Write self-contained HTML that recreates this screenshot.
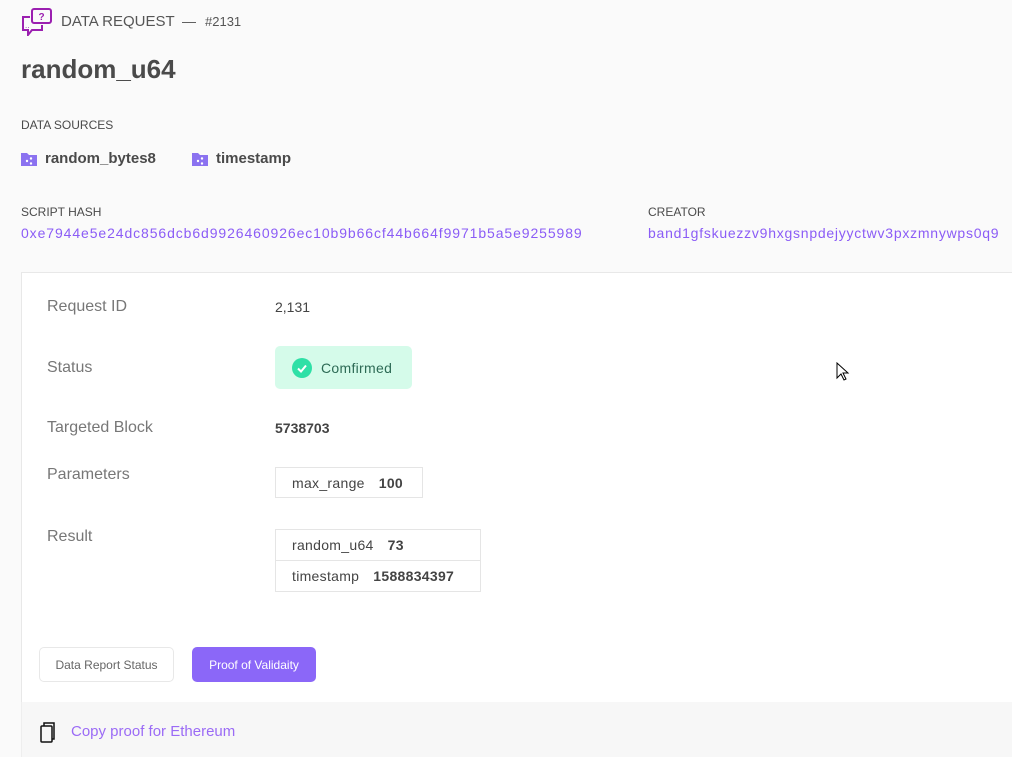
<!DOCTYPE html>
<html><head><style>
body{margin:0;width:1012px;height:757px;background:#fafafa;font-family:"Liberation Sans",sans-serif;color:#4a4a4a;position:relative;overflow:hidden}
.a{position:absolute;white-space:nowrap}
.lbl{font-size:12px;color:#4a4a4a}
.link{font-size:14px;color:#8b5cf6}
.k{font-size:16px;color:#777}
.box{position:absolute;border:1px solid #e5e5e5;background:#fff;font-size:14px;color:#444;box-sizing:border-box;padding:0 16px;display:flex;align-items:center;letter-spacing:0.3px}
.box b{margin-left:14px;font-weight:600}
</style></head><body>
<svg class="a" style="left:21px;top:8px" width="32" height="28" viewBox="0 0 32 28" fill="none" stroke="#9b1fb0" stroke-width="2"><rect x="11" y="1" width="19" height="14" rx="2"/><path d="M9 9H2v13h5v5l4-5h10v-5"/><text x="17.5" y="12" font-size="10" fill="#9b1fb0" stroke="none" font-family="Liberation Sans" font-weight="bold">?</text><text x="4" y="20" font-size="8" fill="#9b1fb0" stroke="none">..</text></svg>
<div class="a" style="left:61px;top:13px;font-size:15px;color:#555">DATA REQUEST</div>
<div class="a" style="left:182px;top:13px;font-size:14px;color:#555">—</div>
<div class="a" style="left:205px;top:14px;font-size:13px;color:#555">#2131</div>
<div class="a" style="left:21px;top:54px;font-size:26px;font-weight:bold;color:#4a4a4a">random_u64</div>
<div class="a lbl" style="left:21px;top:118px">DATA SOURCES</div>
<svg class="a" style="left:21px;top:152px" width="16" height="14"><path d="M0 1h6l2 2h8v11H0z" fill="#8b72f0"/><circle cx="6" cy="9" r="1.2" fill="#fff"/><circle cx="10" cy="6.5" r="1.2" fill="#fff"/><circle cx="10" cy="11.5" r="1.2" fill="#fff"/></svg>
<div class="a" style="left:45px;top:150px;font-size:15px;font-weight:bold">random_bytes8</div>
<svg class="a" style="left:192px;top:152px" width="16" height="14"><path d="M0 1h6l2 2h8v11H0z" fill="#8b72f0"/><circle cx="6" cy="9" r="1.2" fill="#fff"/><circle cx="10" cy="6.5" r="1.2" fill="#fff"/><circle cx="10" cy="11.5" r="1.2" fill="#fff"/></svg>
<div class="a" style="left:216px;top:150px;font-size:15px;font-weight:bold">timestamp</div>
<div class="a lbl" style="left:21px;top:205px">SCRIPT HASH</div>
<div class="a link" style="left:21px;top:225px;letter-spacing:0.9px">0xe7944e5e24dc856dcb6d9926460926ec10b9b66cf44b664f9971b5a5e9255989</div>
<div class="a lbl" style="left:648px;top:205px">CREATOR</div>
<div class="a link" style="left:648px;top:225px;letter-spacing:0.75px">band1gfskuezzv9hxgsnpdejyyctwv3pxzmnywps0q9</div>
<div class="a" style="left:21px;top:272px;width:991px;height:430px;background:#fff;border-top:1px solid #e8e8e8;border-left:1px solid #e8e8e8"></div>
<div class="a" style="left:21px;top:702px;width:991px;height:55px;background:#f7f7f7;border-left:1px solid #eee"></div>
<div class="a k" style="left:47px;top:298px">Request ID</div>
<div class="a" style="left:275px;top:299px;font-size:14px;color:#444">2,131</div>
<div class="a k" style="left:47px;top:359px">Status</div>
<div class="a" style="left:275px;top:346px;width:137px;height:43px;background:#d5fbea;border-radius:5px"></div>
<div class="a" style="left:292px;top:358px;width:20px;height:20px;border-radius:50%;background:#2ee0a6"></div>
<svg class="a" style="left:292px;top:358px" width="20" height="20"><path d="M6 10.5l3 3 5-6" stroke="#fff" stroke-width="2" fill="none"/></svg>
<div class="a" style="left:321px;top:360px;font-size:14px;color:#2d6a55;letter-spacing:0.3px">Comfirmed</div>
<div class="a k" style="left:47px;top:419px">Targeted Block</div>
<div class="a" style="left:275px;top:420px;font-size:14px;font-weight:bold;color:#444">5738703</div>
<div class="a k" style="left:47px;top:466px">Parameters</div>
<div class="box" style="left:275px;top:467px;width:148px;height:31px">max_range<b>100</b></div>
<div class="a k" style="left:47px;top:528px">Result</div>
<div class="box" style="left:275px;top:529px;width:206px;height:32px">random_u64<b>73</b></div>
<div class="box" style="left:275px;top:560px;width:206px;height:32px">timestamp<b>1588834397</b></div>
<div class="a" style="left:39px;top:647px;width:135px;height:35px;border:1px solid #e8e8e8;border-radius:5px;box-sizing:border-box;font-size:12px;color:#666;display:flex;align-items:center;justify-content:center">Data Report Status</div>
<div class="a" style="left:192px;top:647px;width:124px;height:35px;background:#8b67f8;border-radius:5px;font-size:12px;color:#fff;display:flex;align-items:center;justify-content:center">Proof of Validaity</div>
<svg class="a" style="left:40px;top:722px" width="18" height="21" fill="none" stroke="#111" stroke-width="1.5"><rect x="1" y="4" width="11" height="16" rx="1"/><path d="M4 4V1h10v16h-2"/></svg>
<div class="a" style="left:71px;top:723px;font-size:15px;color:#9b6bf6">Copy proof for Ethereum</div>
<svg class="a" style="left:836px;top:362px" width="14" height="20"><path d="M1 1v15l4-4 3 6 2-1-3-6h5z" fill="#fff" stroke="#000" stroke-width="1"/></svg>
</body></html>
